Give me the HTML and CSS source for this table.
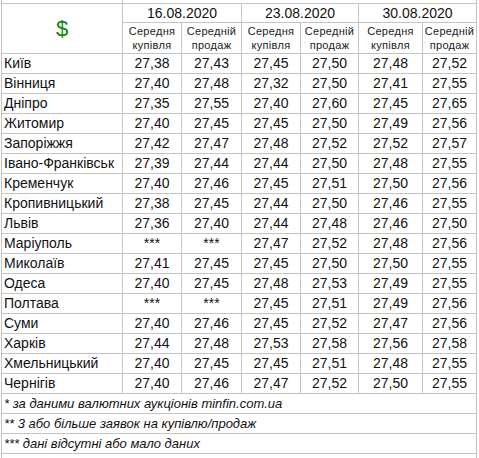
FILE: index.html
```html
<!DOCTYPE html>
<html lang="uk">
<head>
<meta charset="utf-8">
<link rel="stylesheet" href="styles.css">
</head>
<body>
<table class="sheet">
<colgroup>
<col class="c-label"><col class="c-a"><col class="c-b"><col class="c-c"><col class="c-d"><col class="c-e"><col class="c-f">
</colgroup>
<tbody>
<tr class="top-spacer"><td></td><td colspan="6"></td></tr>
<tr class="date-row">
<td rowspan="2" class="dollar">$</td>
<td colspan="2" class="date">16.08.2020</td>
<td colspan="2" class="date">23.08.2020</td>
<td colspan="2" class="date">30.08.2020</td>
</tr>
<tr class="sub-row">
<td class="sub">Середня<br>купівля</td><td class="sub">Середній<br>продаж</td>
<td class="sub">Середня<br>купівля</td><td class="sub">Середній<br>продаж</td>
<td class="sub">Середня<br>купівля</td><td class="sub">Середній<br>продаж</td>
</tr>
<tr><td class="city">Київ</td><td>27,38</td><td>27,43</td><td>27,45</td><td>27,50</td><td>27,48</td><td>27,52</td></tr>
<tr><td class="city">Вінниця</td><td>27,40</td><td>27,48</td><td>27,32</td><td>27,50</td><td>27,41</td><td>27,55</td></tr>
<tr><td class="city">Дніпро</td><td>27,35</td><td>27,55</td><td>27,40</td><td>27,60</td><td>27,45</td><td>27,65</td></tr>
<tr><td class="city">Житомир</td><td>27,40</td><td>27,45</td><td>27,45</td><td>27,50</td><td>27,49</td><td>27,56</td></tr>
<tr><td class="city">Запоріжжя</td><td>27,42</td><td>27,47</td><td>27,48</td><td>27,52</td><td>27,52</td><td>27,57</td></tr>
<tr><td class="city">Івано-Франківськ</td><td>27,39</td><td>27,44</td><td>27,44</td><td>27,50</td><td>27,48</td><td>27,55</td></tr>
<tr><td class="city">Кременчук</td><td>27,40</td><td>27,46</td><td>27,45</td><td>27,51</td><td>27,50</td><td>27,56</td></tr>
<tr><td class="city">Кропивницький</td><td>27,38</td><td>27,45</td><td>27,44</td><td>27,50</td><td>27,46</td><td>27,55</td></tr>
<tr><td class="city">Львів</td><td>27,36</td><td>27,40</td><td>27,44</td><td>27,48</td><td>27,46</td><td>27,50</td></tr>
<tr><td class="city">Маріуполь</td><td>***</td><td>***</td><td>27,47</td><td>27,52</td><td>27,48</td><td>27,56</td></tr>
<tr><td class="city">Миколаїв</td><td>27,41</td><td>27,45</td><td>27,45</td><td>27,50</td><td>27,50</td><td>27,55</td></tr>
<tr><td class="city">Одеса</td><td>27,40</td><td>27,45</td><td>27,48</td><td>27,53</td><td>27,49</td><td>27,55</td></tr>
<tr><td class="city">Полтава</td><td>***</td><td>***</td><td>27,45</td><td>27,51</td><td>27,49</td><td>27,56</td></tr>
<tr><td class="city">Суми</td><td>27,40</td><td>27,46</td><td>27,45</td><td>27,52</td><td>27,47</td><td>27,56</td></tr>
<tr><td class="city">Харків</td><td>27,44</td><td>27,48</td><td>27,53</td><td>27,58</td><td>27,56</td><td>27,58</td></tr>
<tr><td class="city">Хмельницький</td><td>27,40</td><td>27,45</td><td>27,45</td><td>27,51</td><td>27,48</td><td>27,55</td></tr>
<tr><td class="city">Чернігів</td><td>27,40</td><td>27,46</td><td>27,47</td><td>27,52</td><td>27,50</td><td>27,55</td></tr>
<tr class="note"><td colspan="7">* за даними валютних аукціонів minfin.com.ua</td></tr>
<tr class="note"><td colspan="7">** 3 або більше заявок на купівлю/продаж</td></tr>
<tr class="note"><td colspan="7">*** дані відсутні або мало даних</td></tr>
<tr class="note"><td colspan="7"></td></tr>
</tbody>
</table>
</body>
</html>
```
FILE: styles.css
```css
html, body {
  margin: 0;
  padding: 0;
  background: #ffffff;
}
body {
  font-family: "Liberation Sans", Arial, sans-serif;
  color: #000000;
  overflow: hidden;
}
.sheet {
  border-collapse: collapse;
  table-layout: fixed;
  margin: 0 0 0 1px;
  width: 475px;
}
.c-label { width: 121px; }
.c-a { width: 59px; }
.c-b { width: 60px; }
.c-c { width: 59px; }
.c-d { width: 58px; }
.c-e { width: 64px; }
.c-f { width: 54px; }
.sheet td {
  border: 1px solid #c4c4c4;
  padding: 0;
  height: 19px;
  font-size: 14px;
  line-height: 19px;
  text-align: center;
  white-space: nowrap;
  overflow: hidden;
  color: #111111;
}
.sheet .top-spacer td {
  border-top: none;
  height: 3px;
  line-height: 3px;
}
.sheet .date-row td {
  height: 18px;
  line-height: 18px;
}
.sheet td.dollar {
  color: #0a8a0a;
  font-size: 22px;
}
.sheet .sub-row td {
  height: 30px;
}
.sheet td.sub {
  font-size: 11px;
  line-height: 14px;
  letter-spacing: 0.3px;
  color: #1a1a1a;
}
.sheet td.city {
  text-align: left;
  padding-left: 2px;
}
.sheet .note td {
  text-align: left;
  font-style: italic;
  font-size: 13px;
  padding-left: 2px;
}
```
